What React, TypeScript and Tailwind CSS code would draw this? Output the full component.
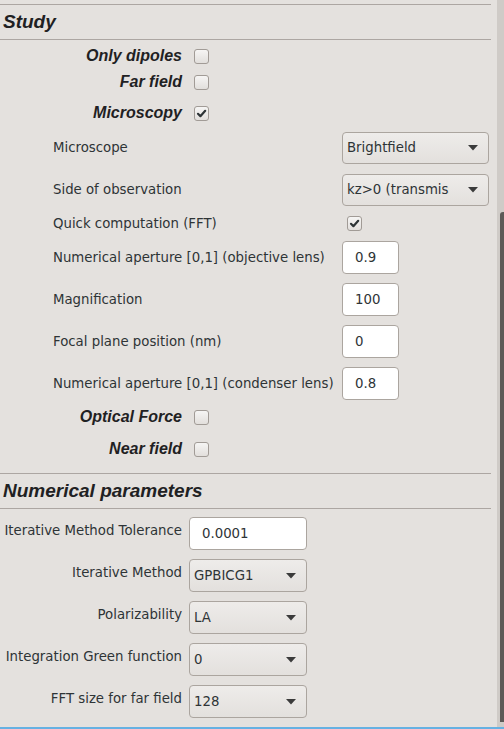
import type { ReactNode } from 'react';

const label = "font-['DejaVu_Sans','Liberation_Sans',sans-serif] text-[13.3px] text-[#2e3436]";
const bold = "font-['Liberation_Sans',Arial,sans-serif] font-bold italic text-[#1f2123]";

function Line() {
  return <div className="h-px w-[491px] bg-[#aca6a2]" />;
}

function Header({ children }: { children: ReactNode }) {
  return (
    <div className={`h-[34px] flex items-center pl-[3px] text-[19px] ${bold}`}>{children}</div>
  );
}

function Checkbox({ checked = false }: { checked?: boolean }) {
  return (
    <div className="w-[15px] h-[15px] shrink-0 rounded-[3px] border border-[#a19b96] bg-gradient-to-b from-[#f6f5f4] to-[#e2dfdc] flex items-center justify-center">
      {checked && (
        <svg width="11" height="11" viewBox="0 0 11 11">
          <path d="M2 5.8 L4.4 8.2 L9.2 2.8" fill="none" stroke="#2e3436" strokeWidth="2.2" strokeLinecap="round" strokeLinejoin="round" />
        </svg>
      )}
    </div>
  );
}

function CheckRow({ text, checked, className = '' }: { text: string; checked?: boolean; className?: string }) {
  return (
    <div className={`flex items-center h-[15px] ${className}`}>
      <div className={`w-[182px] text-right text-[16px] leading-[15px] -translate-y-[1px] ${bold}`}>{text}</div>
      <div className="ml-[12px]">
        <Checkbox checked={checked} />
      </div>
    </div>
  );
}

function Arrow() {
  return (
    <svg width="10" height="6" viewBox="0 0 10 6" className="shrink-0">
      <path d="M0 0 H10 L5 5.5 Z" fill="#3b3b3b" />
    </svg>
  );
}

function Select({ value, width, clip }: { value: string; width: string; clip?: boolean }) {
  return (
    <div
      className={`${width} shrink-0 rounded-[4px] border border-[#aba59f] bg-gradient-to-b from-[#eeecea] to-[#e3e0dd] flex items-center pl-[4px] pr-[10px]`}
    >
      <span className={`${label} ${clip ? 'w-[102px] overflow-hidden' : ''} shrink-0 whitespace-nowrap`}>{value}</span>
      <div className="flex-1" />
      <Arrow />
    </div>
  );
}

function Input({ value, width }: { value: string; width: string }) {
  return (
    <div
      className={`${width} h-[33px] shrink-0 rounded-[4px] border border-[#aba59f] bg-white flex items-center pl-[12px] ${label}`}
    >
      {value}
    </div>
  );
}

function SubRow({ text, children, className = '' }: { text: string; children: ReactNode; className?: string }) {
  return (
    <div className={`flex items-center pl-[53px] ${className}`}>
      <div className={`w-[289px] ${label}`}>{text}</div>
      {children}
    </div>
  );
}

function ParamRow({ text, children, className = '' }: { text: string; children: ReactNode; className?: string }) {
  return (
    <div className={`flex items-center ${className}`}>
      <div className={`w-[182px] text-right pb-[6px] whitespace-nowrap ${label}`}>{text}</div>
      <div className="ml-[7px]">{children}</div>
    </div>
  );
}

export default function App() {
  return (
    <div className="w-[504px] h-[729px] overflow-hidden bg-[#e4e1de] flex flex-col">
      <div className="flex flex-1 min-h-0">
        <div className="w-[497px] pt-[4px]">
          <Line />
          <Header>Study</Header>
          <Line />

          <CheckRow text="Only dipoles" className="mt-[9px]" />
          <CheckRow text="Far field" className="mt-[11px]" />
          <CheckRow text="Microscopy" checked className="mt-[16px]" />

          <SubRow text="Microscope" className="mt-[11px]">
            <Select value="Brightfield" width="w-[147px] h-[32px]" />
          </SubRow>
          <SubRow text="Side of observation" className="mt-[10px]">
            <Select value="kz>0 (transmission)" width="w-[147px] h-[32px]" clip />
          </SubRow>
          <SubRow text="Quick computation (FFT)" className="mt-[10px] h-[15px]">
            <div className="ml-[5px]">
              <Checkbox checked />
            </div>
          </SubRow>
          <SubRow text="Numerical aperture [0,1] (objective lens)" className="mt-[10px]">
            <Input value="0.9" width="w-[57px]" />
          </SubRow>
          <SubRow text="Magnification" className="mt-[9px]">
            <Input value="100" width="w-[57px]" />
          </SubRow>
          <SubRow text="Focal plane position (nm)" className="mt-[9px]">
            <Input value="0" width="w-[57px]" />
          </SubRow>
          <SubRow text="Numerical aperture [0,1] (condenser lens)" className="mt-[9px]">
            <Input value="0.8" width="w-[57px]" />
          </SubRow>

          <CheckRow text="Optical Force" className="mt-[10px]" />
          <CheckRow text="Near field" className="mt-[17px]" />

          <div className="mt-[16px]">
            <Line />
          </div>
          <Header>Numerical parameters</Header>
          <Line />

          <ParamRow text="Iterative Method Tolerance" className="mt-[8px]">
            <Input value="0.0001" width="w-[118px]" />
          </ParamRow>
          <ParamRow text="Iterative Method" className="mt-[9px]">
            <Select value="GPBICG1" width="w-[118px] h-[33px]" />
          </ParamRow>
          <ParamRow text="Polarizability" className="mt-[9px]">
            <Select value="LA" width="w-[118px] h-[33px]" />
          </ParamRow>
          <ParamRow text="Integration Green function" className="mt-[9px]">
            <Select value="0" width="w-[118px] h-[33px]" />
          </ParamRow>
          <ParamRow text="FFT size for far field" className="mt-[9px]">
            <Select value="128" width="w-[118px] h-[33px]" />
          </ParamRow>
        </div>
        <div className="w-[7px] bg-[#cfcbc7] flex flex-col items-end pb-[5px]">
          <div className="mt-[212px] flex-1 w-[4px] rounded-tl-[3px] bg-[#5d5957]" />
        </div>
      </div>
      <div className="h-[2px] bg-[#66b1e2]" />
    </div>
  );
}
